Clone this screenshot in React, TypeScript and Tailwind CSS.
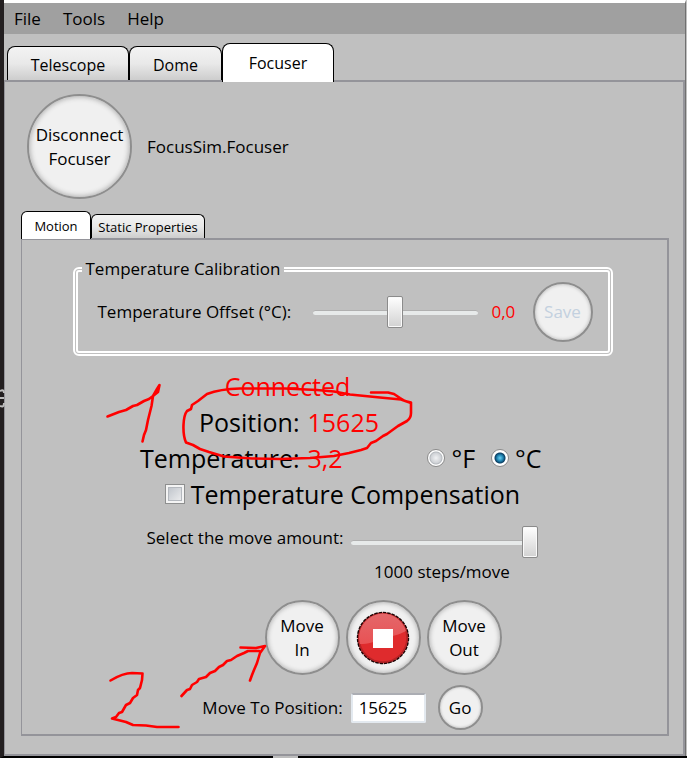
import { useState } from 'react';
import type { ReactNode } from 'react';
import clsx from 'clsx';

const sliderClass =
  'block appearance-none bg-transparent h-8 ' +
  '[&::-webkit-slider-runnable-track]:h-[5px] [&::-webkit-slider-runnable-track]:rounded-sm [&::-webkit-slider-runnable-track]:border-t [&::-webkit-slider-runnable-track]:border-[#b0b0b0] [&::-webkit-slider-runnable-track]:bg-[#e7eaea] ' +
  '[&::-webkit-slider-thumb]:appearance-none [&::-webkit-slider-thumb]:-mt-[15px] [&::-webkit-slider-thumb]:h-8 [&::-webkit-slider-thumb]:w-4 [&::-webkit-slider-thumb]:rounded-xs [&::-webkit-slider-thumb]:border [&::-webkit-slider-thumb]:border-[#8b8b8b] [&::-webkit-slider-thumb]:bg-linear-to-b [&::-webkit-slider-thumb]:from-white [&::-webkit-slider-thumb]:to-[#d2d2d2] [&::-webkit-slider-thumb]:shadow-[inset_0_0_0_1px_#fafafa]';

type TabProps = {
  label: string;
  active: boolean;
  className: string;
  onClick: () => void;
};

const Tab = ({ label, active, className, onClick }: TabProps) => (
  <button
    type="button"
    role="tab"
    aria-selected={active}
    onClick={onClick}
    className={clsx(
      'border border-b-0 border-black',
      active ? 'relative bg-white' : 'bg-linear-to-b from-[#f3f3f3] from-0% via-[#e9e9e9] via-50% to-[#cdcdcd]',
      className,
    )}
  >
    {label}
  </button>
);

type RoundButtonProps = {
  children: ReactNode;
  className: string;
  disabled?: boolean;
  label?: string;
};

const RoundButton = ({ children, className, disabled, label }: RoundButtonProps) => (
  <button
    type="button"
    disabled={disabled}
    aria-label={label}
    className={clsx(
      'flex shrink-0 items-center justify-center rounded-full border-[#8e8e8e] bg-[#f0f0f0] text-center leading-6 disabled:text-[#c3d0df]',
      className,
    )}
  >
    {children}
  </button>
);

const StopIcon = () => (
  <svg className="size-[54px]" viewBox="0 0 54 54" aria-hidden="true">
    <defs>
      <linearGradient id="stopShine" x1="0" y1="0" x2="0" y2="1">
        <stop offset="0" stopColor="#e4676a" />
        <stop offset="1" stopColor="#e85254" />
      </linearGradient>
    </defs>
    <circle cx="27" cy="27" r="25.4" fill="#df2b2d" stroke="#1c0405" strokeWidth="1.6" strokeDasharray="3.5 0.9" />
    <circle cx="27" cy="27" r="24" fill="none" stroke="#b42326" strokeWidth="1.6" />
    <path d="M4 33 A23.6 23.600 0 1 1 50 20 C43 24 36 25 28 27 C19 31 12 33 4 33Z" fill="url(#stopShine)" />
    <rect x="17" y="18" width="20" height="19" fill="#fff" />
  </svg>
);

// Hand drawn notes on top of the window
const Annotations = () => (
  <svg
    className="pointer-events-none absolute -left-1 top-0 z-10"
    width="687"
    height="758"
    viewBox="0 0 687 758"
    fill="none"
    stroke="#ff0000"
    strokeWidth="2.6"
    strokeLinecap="round"
    strokeLinejoin="round"
    aria-hidden="true"
  >
    <path d="M107.500 416.500 L119 412 L126 410 L133 406 L137 405 L144 401 L149 399 L153 396 L157 389 L159.500 385 L158 392 L153 396 L151.500 406 L148 420 L146 430 L144 435 L142.500 441.500" />
    <path d="M371 392.500 H388 L394 394 L400 398 L405 401 L411 402.500 V413 Q411 418 407 421 L398 426 L387 434 L383 436 L376 441 L371 443 L367 448 L361 450 L349 453 L334 456 L310 458 L280 459 L252 458.500 L224 456.500 L209 452 L200 449 L193 445 L186 442.500 C182 433 183 416 187 411 L191 409 L192 405 L198 401 L207 394 Q220 389 240 388.500 L285 388.500 L317 390 L334 391.500 L350 394.500 L380 397.500 L401 399.500 L411 403" />
    <path d="M110.500 680.500 C118 676 125 673 132 673 L142.500 673.500 L142 680 L140 688 L138 690 L137 695 L133 698 L130 703 L126 705 L122 712 L119 713 L116 717 L112 718.500 L126 722 L133 725 L146 725.500 L157 727 H178.500" />
    <path d="M181.500 696 L187 690 L190 689 L192 685 L197 682 L199 679 L206 677 L210 673 L215 671 L219 667 L223 665 L227 661 L231 660 L237 656 L244 653 L248 651 H259 M240.500 647.500 L256 648 L265 646 L260 653 L257 663 L254 670 L252 675 L250 680.500" />
    {/* sliver of the window behind */}
    <path d="M0 391 Q4 389 4 393 M0 398 H4 M0 406 Q4 408 4 403" stroke="#bdbdbd" strokeWidth="2" strokeLinecap="butt" />
    <path d="M273 757 H298" stroke="#bdbdbd" strokeWidth="2" strokeLinecap="butt" />
  </svg>
);

const radioClass =
  'size-[18px] appearance-none rounded-full border border-[#8b8b8b] bg-[radial-gradient(circle_at_50%_50%,#f1f2f4_0,#cfd2d6_5px,#b5b9be_6px,#fff_7px)] ' +
  'checked:bg-[radial-gradient(circle_at_50%_50%,#6bd0f2_0,#2187b5_3px,#0b3f63_5px,#fff_6px)]';

const App = () => {
  const [tab, setTab] = useState('Focuser');
  const [innerTab, setInnerTab] = useState('Motion');
  const [offset, setOffset] = useState(0);
  const [steps, setSteps] = useState(1000);
  const [unit, setUnit] = useState('C');
  const [compensate, setCompensate] = useState(false);
  const [target, setTarget] = useState('15625');

  return (
    <div className="relative flex min-h-screen flex-col border-b-2 border-l-4 border-b-black border-l-[#231f20] bg-[#c0c0c0] font-['Open_Sans','Noto_Sans',sans-serif] text-[17px] leading-6 text-black">
      <Annotations />

      <div className="mr-px flex flex-1 flex-col border-r border-t-3 border-r-[#707070] border-t-white">
        {/* Menu bar */}
        <nav className="flex h-[31px] items-center gap-[22px] bg-[#a0a0a0] px-2.5">
          <button type="button">File</button>
          <button type="button">Tools</button>
          <button type="button">Help</button>
        </nav>

        {/* Main tabs */}
        <div role="tablist" className="-mb-0.5 flex items-end pl-[3px] pt-[9px] text-base">
          <Tab label="Telescope" active={tab === 'Telescope'} onClick={() => setTab('Telescope')} className="mb-0.5 h-[34px] w-[122px] rounded-t-lg pt-0.5" />
          <Tab label="Dome" active={tab === 'Dome'} onClick={() => setTab('Dome')} className="mb-0.5 h-[34px] w-[93px] rounded-t-lg pt-0.5" />
          <Tab label="Focuser" active={tab === 'Focuser'} onClick={() => setTab('Focuser')} className="h-[39px] w-[112px] rounded-t-lg" />
        </div>

        <main className="flex flex-1 flex-col border-2 border-l-1 border-[#94949a] pb-[18px] pl-4 pr-3.5">
          <div className="flex items-center gap-[15px] pl-1.5 pt-3">
            <RoundButton className="size-[105px] border-2 shadow-[inset_0_0_5px_1px_#b0b0b0]">
              Disconnect
              <br />
              Focuser
            </RoundButton>
            <span>FocusSim.Focuser</span>
          </div>

          {/* Motion / Static Properties */}
          <div role="tablist" className="-mb-px mt-3 flex items-end text-[13px]">
            <Tab label="Motion" active={innerTab === 'Motion'} onClick={() => setInnerTab('Motion')} className="h-7 w-[70px] rounded-t-md" />
            <Tab label="Static Properties" active={innerTab === 'Static Properties'} onClick={() => setInnerTab('Static Properties')} className="mb-px h-6 w-[114px] rounded-t-md" />
          </div>

          <section className="flex-1 border-2 border-l-1 border-[#94949a] pr-1 pt-[17px]">
            <fieldset className="mx-auto flex h-[99px] w-[540px] items-center rounded-md border-5 border-double border-white pb-2 pl-5 pr-[15px]">
              <legend className="-ml-4 px-1">Temperature Calibration</legend>
              <label htmlFor="offset" className="w-[215px]">Temperature Offset (°C):</label>
              <input
                id="offset"
                type="range"
                min={-10}
                max={10}
                value={offset}
                onChange={(e) => setOffset(Number(e.target.value))}
                className={clsx(sliderClass, 'w-[165px]')}
              />
              <output htmlFor="offset" className="ml-3.5 text-[#ff0000]">{offset.toFixed(1).replace('.', ',')}</output>
              <RoundButton disabled className="ml-auto size-[60px] border-2 shadow-[inset_0_0_3px_1px_#c8c8c8]">Save</RoundButton>
            </fieldset>

            <div className="mx-auto mt-3 w-[398px]">
              <div className="text-[25px] leading-9">
                <p className="w-72 text-center text-[#ff0000]">Connected</p>
                <div className="-ml-1 flex gap-2">
                  <span className="w-40 text-right">Position:</span>
                  <span className="text-[#ff0000]">15625</span>
                </div>
                <div className="-ml-1 flex items-center gap-2">
                  <span className="w-40 text-right">Temperature:</span>
                  <span className="text-[#ff0000]">3,2</span>
                  <div className="ml-auto flex gap-4">
                    <label className="flex items-center gap-1.5">
                      <input type="radio" name="unit" className={radioClass} checked={unit === 'F'} onChange={() => setUnit('F')} />
                      °F
                    </label>
                    <label className="flex items-center gap-1.5">
                      <input type="radio" name="unit" className={radioClass} checked={unit === 'C'} onChange={() => setUnit('C')} />
                      °C
                    </label>
                  </div>
                </div>
                <label className="flex items-center justify-center gap-1.5">
                  <input
                    type="checkbox"
                    checked={compensate}
                    onChange={(e) => setCompensate(e.target.checked)}
                    className="size-5 appearance-none border border-[#8e8f8f] bg-linear-to-br from-[#b8bdc5] to-[#f4f4f4] shadow-[inset_0_0_0_2px_#f4f4f4,inset_0_0_0_3px_#b4b8be] checked:to-[#2187b5]"
                  />
                  Temperature Compensation
                </label>
              </div>

              <div className="mt-3.5 flex justify-center gap-2">
                <label htmlFor="amount">Select the move amount:</label>
                <input
                  id="amount"
                  type="range"
                  min={1}
                  max={1000}
                  value={steps}
                  onChange={(e) => setSteps(Number(e.target.value))}
                  className={clsx(sliderClass, 'w-[187px]')}
                />
              </div>
              <p className="ml-[205px] mt-0.5 w-[187px] text-center">{steps} steps/move</p>

              <div className="mr-10 mt-4 flex justify-end gap-1.5">
                <RoundButton className="size-[75px] border-2 shadow-[inset_0_0_4px_1px_#b8b8b8]">
                  Move
                  <br />
                  In
                </RoundButton>
                <RoundButton label="Stop" className="size-[75px] border-2 shadow-[inset_0_0_4px_1px_#b8b8b8]">
                  <StopIcon />
                </RoundButton>
                <RoundButton className="size-[75px] border-2 shadow-[inset_0_0_4px_1px_#b8b8b8]">
                  Move
                  <br />
                  Out
                </RoundButton>
              </div>

              <div className="mt-2.5 flex items-center justify-center">
                <label htmlFor="target">Move To Position:</label>
                <input
                  id="target"
                  type="text"
                  value={target}
                  onChange={(e) => setTarget(e.target.value)}
                  className="ml-2 h-[30px] w-[75px] rounded-xs border-2 border-[#e3e9ef] border-t-[#abadb3] bg-white px-1.5"
                />
                <RoundButton className="ml-3 size-[45px] border-2 shadow-[inset_0_0_2px_1px_#d0d0d0]">Go</RoundButton>
              </div>
            </div>
          </section>
        </main>
      </div>
    </div>
  );
};

export default App;
